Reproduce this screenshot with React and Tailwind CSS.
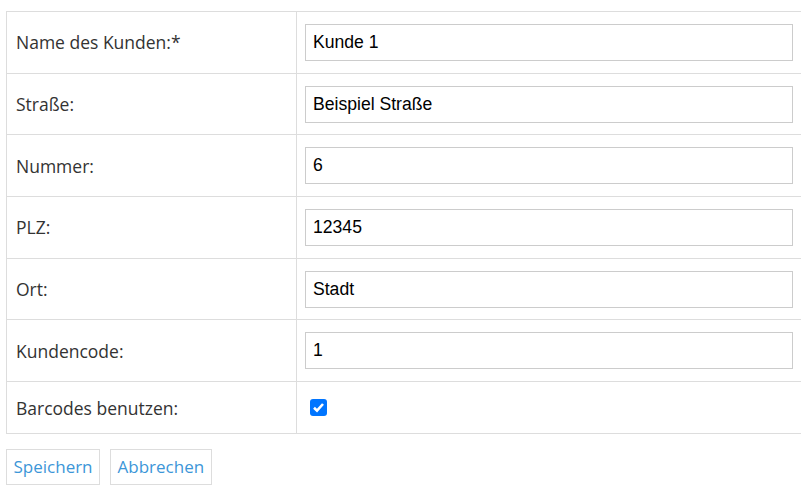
import React from "react";

const rows = [
  ["Name des Kunden:*", "Kunde 1"],
  ["Straße:", "Beispiel Straße"],
  ["Nummer:", "6"],
  ["PLZ:", "12345"],
  ["Ort:", "Stadt"],
  ["Kundencode:", "1"],
];

export default function App() {
  return (
    <div className="bg-white w-[801px] h-[497px] overflow-hidden pl-[6px] pt-[11px]" style={{ fontFamily: '"Open Sans", sans-serif' }}>
      <table className="border-collapse w-[797px] table-fixed">
        <colgroup>
          <col className="w-[290px]" />
          <col />
        </colgroup>
        <tbody>
          {rows.map(([label, value]) => (
            <tr key={label}>
              <td className="border border-[#dddddd] px-[9px] py-0 h-[61.7px] text-[17.5px] text-[#333333] align-middle">
                {label}
              </td>
              <td className="border border-[#dddddd] pl-[8px] pr-0 py-0 h-[61.7px] align-middle">
                <input
                  type="text"
                  readOnly
                  value={value}
                  className="block w-[488px] h-[37px] border border-[#cccccc] px-[7px] text-[17.6px] text-black outline-none"
                  style={{ fontFamily: '"Liberation Sans", Arial, sans-serif' }}
                />
              </td>
            </tr>
          ))}
          <tr>
            <td className="border border-[#dddddd] px-[9px] py-0 h-[52px] text-[17.5px] text-[#333333] align-middle">
              Barcodes benutzen:
            </td>
            <td className="border border-[#dddddd] pl-[8px] py-0 h-[52px] align-middle">
              <div className="ml-[5px] w-[17px] h-[17px] rounded-[3px] bg-[#0075ff] flex items-center justify-center">
                <svg width="13" height="13" viewBox="0 0 13 13">
                  <path d="M2 6.8 L5 9.6 L11 3" fill="none" stroke="white" strokeWidth="2.6" />
                </svg>
              </div>
            </td>
          </tr>
        </tbody>
      </table>
      <div className="flex gap-[10px] mt-[15px]">
        <button className="h-[36px] px-[6.5px] border border-[#dddddd] bg-white text-[17px] text-[#3c96d8]">Speichern</button>
        <button className="h-[36px] px-[6.5px] border border-[#dddddd] bg-white text-[17px] text-[#3c96d8]">Abbrechen</button>
      </div>
    </div>
  );
}
